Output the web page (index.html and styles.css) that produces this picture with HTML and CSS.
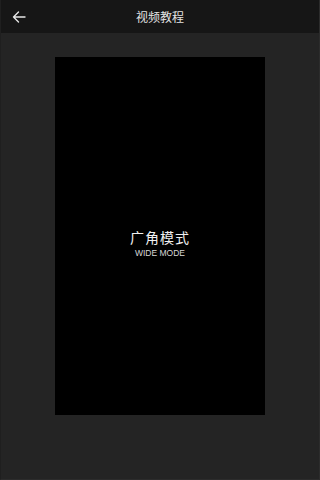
FILE: index.html
```html
<!DOCTYPE html>
<html lang="zh">
<head>
<meta charset="utf-8">
<link rel="stylesheet" href="styles.css">
</head>
<body>
<div class="screen">
  <header class="topbar">
    <svg class="back" width="14" height="12" viewBox="0 0 14 12"><path d="M13 6H1.5M6.5 1L1.5 6l5 5" fill="none" stroke="#e6e6e6" stroke-width="1.4" stroke-linecap="round" stroke-linejoin="round"/></svg>
    <div class="title">视频教程</div>
  </header>
  <main class="content">
    <div class="video">
      <div class="label-cn">广角模式</div>
      <div class="label-en">WIDE MODE</div>
    </div>
  </main>
</div>
</body>
</html>
```
FILE: styles.css
```css
* { box-sizing: border-box; }
html, body { margin: 0; padding: 0; background: #242424; }
body { width: 100%; height: 480px; font-family: "Noto Sans CJK SC", "Liberation Sans", sans-serif; }
.screen { width: 100%; height: 480px; display: flex; flex-direction: column; border-right: 1px solid #2c2c2c; border-bottom: 1px solid #2c2c2c; border-left: 1px solid #1f1f1f; }
.topbar { height: 33px; background: #161616; position: relative; display: flex; align-items: center; justify-content: center; flex: none; }
.back { position: absolute; left: 11px; top: 11px; }
.title { color: #e2e2e2; font-size: 12px; line-height: 1; }
.content { flex: 1; padding-top: 24px; display: flex; justify-content: center; align-items: flex-start; }
.video { width: 210px; height: 358px; background: #000; display: flex; flex-direction: column; align-items: center; justify-content: center; padding-top: 15px; }
.label-cn { color: #f0f0f0; font-size: 14px; line-height: 16px; letter-spacing: 1px; }
.label-en { color: #d8d8d8; font-family: "Liberation Sans", sans-serif; font-size: 8.5px; line-height: 10px; margin-top: 3px; }
```
